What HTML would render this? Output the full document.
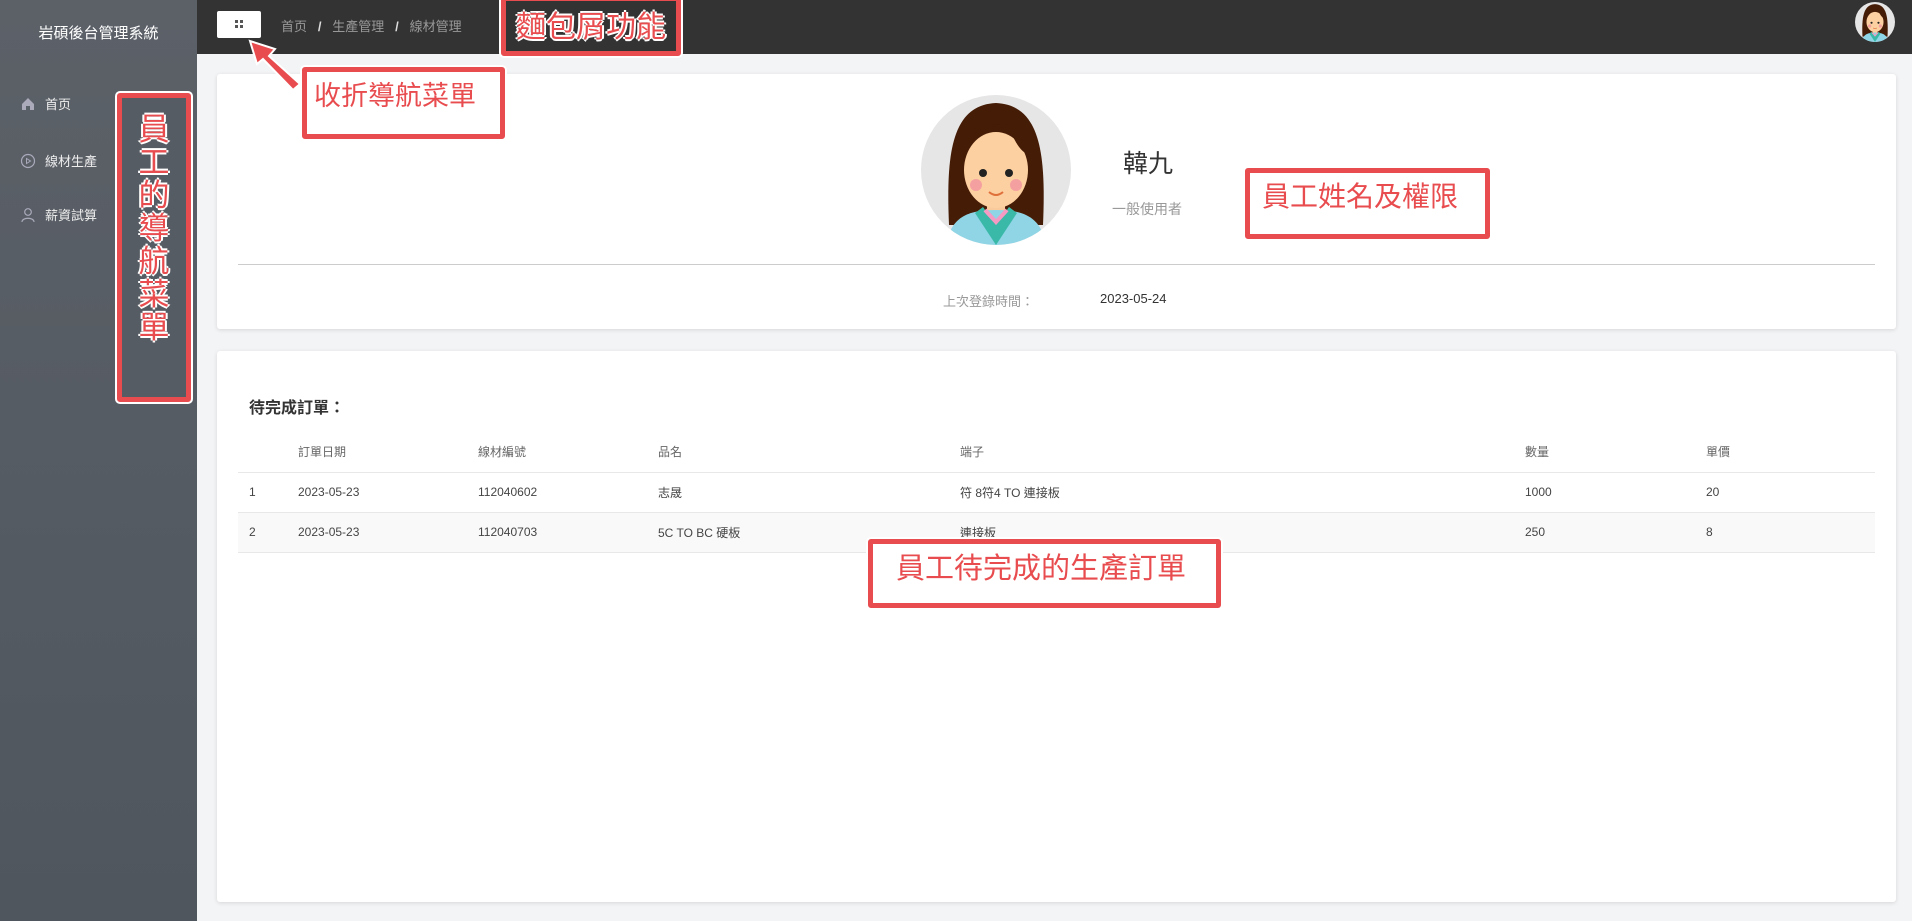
<!DOCTYPE html>
<html><head><meta charset="utf-8"><style>
*{box-sizing:border-box;margin:0;padding:0}
body{width:1912px;height:921px;overflow:hidden;background:#f3f4f6;font-family:"Liberation Sans","Noto Sans CJK TC",sans-serif;position:relative}
.abs{position:absolute}
#side{left:0;top:0;width:197px;height:921px;background:linear-gradient(#5c6168,#4f565e)}
#side .t{position:absolute;top:22px;width:197px;text-align:center;color:#fff;font-size:15px}
.mi{position:absolute;left:20px;color:#eee;font-size:13px;display:flex;align-items:center;gap:9px}
#top{left:197px;top:0;width:1715px;height:54px;background:#333}
.card{position:absolute;background:#fff;border-radius:3px;box-shadow:0 1px 4px rgba(0,0,0,.12)}
.bc{color:#999;font-size:13px;top:16px}
.red{position:absolute;border:5px solid #e84c4f;border-radius:3px;box-shadow:0 0 0 2px #fff}
.rt{color:#e84c4f;font-family:"Noto Sans CJK TC",sans-serif;text-shadow:-2px 0 #fff,2px 0 #fff,0 -2px #fff,0 2px #fff}
table{border-collapse:collapse;font-size:12px;color:#444}
td{height:40px}
</style></head><body>
<div id="side" class="abs"><div class="t">岩碩後台管理系統</div>
<div class="mi" style="top:94px"><svg width="16" height="16" viewBox="0 0 16 16"><path d="M2 8L8 2L14 8V14H10V10H6V14H2Z" fill="#aab"/></svg>首页</div>
<div class="mi" style="top:151px"><svg width="16" height="16" viewBox="0 0 16 16"><circle cx="8" cy="8" r="6.5" fill="none" stroke="#aab" stroke-width="1.2"/><path d="M6.5 5.5L10.5 8L6.5 10.5Z" fill="none" stroke="#aab"/></svg>線材生產</div>
<div class="mi" style="top:205px"><svg width="16" height="16" viewBox="0 0 16 16"><circle cx="8" cy="5" r="3.3" fill="none" stroke="#aab" stroke-width="1.2"/><path d="M2 15C2 10 14 10 14 15" fill="none" stroke="#aab" stroke-width="1.2"/></svg>薪資試算</div>
</div>
<div id="top" class="abs"></div>
<div class="abs" style="left:217px;top:11px;width:44px;height:27px;background:#fff;border-radius:2px"><div class="abs" style="left:18px;top:9px;width:8px;height:8px;background:linear-gradient(90deg,#555 3px,transparent 3px,transparent 5px,#555 5px)"></div><div class="abs" style="left:18px;top:12px;width:8px;height:2px;background:#fff"></div></div>
<div class="abs bc" style="left:281px">首页 &nbsp;&nbsp;<b style="color:#ddd">/</b>&nbsp;&nbsp; 生產管理 &nbsp;&nbsp;<b style="color:#ddd">/</b>&nbsp;&nbsp; 線材管理</div>
<svg class="abs" style="left:1855px;top:2px" width="40" height="40" viewBox="0 0 150 150"><use href="#av"/></svg>

<div class="card" style="left:217px;top:74px;width:1679px;height:255px"></div>
<svg class="abs" style="left:921px;top:95px" width="150" height="150" viewBox="0 0 150 150"><g id="av"><circle cx="75" cy="75" r="75" fill="#e6e6e6"/><clipPath id="c"><circle cx="75" cy="75" r="75"/></clipPath><g clip-path="url(#c)"><path d="M28 130C25 60 30 10 75 8C120 10 125 60 122 130Z" fill="#451c06"/><rect x="66" y="100" width="18" height="20" fill="#f9cb9c"/><path d="M25 150C30 120 50 115 75 115C100 115 120 120 125 150Z" fill="#8fd5e5"/><path d="M62 112L75 130L88 112L96 118L75 150L54 118Z" fill="#3ab9a9"/><path d="M64 115L75 127L86 115" fill="none" stroke="#f59ac2" stroke-width="4"/><ellipse cx="75" cy="75" rx="32" ry="38" fill="#fcd0a1"/><path d="M42 70C45 40 60 30 75 32C95 30 90 52 108 60L108 40C100 25 50 25 42 45Z" fill="#451c06"/><circle cx="62" cy="78" r="4" fill="#222"/><circle cx="88" cy="78" r="4" fill="#222"/><circle cx="55" cy="90" r="6" fill="#f5a0a0"/><circle cx="95" cy="90" r="6" fill="#f5a0a0"/><path d="M68 97Q75 103 82 97" fill="none" stroke="#e0703a" stroke-width="2"/></g></g></svg>
<div class="abs" style="left:1123px;top:144px;font-size:25px;color:#333">韓九</div>
<div class="abs" style="left:1112px;top:199px;font-size:14px;color:#999">一般使用者</div>
<div class="abs" style="left:238px;top:264px;width:1637px;height:1px;background:#ccc"></div>
<div class="abs" style="left:943px;top:291px;font-size:13px;color:#999">上次登錄時間：</div>
<div class="abs" style="left:1100px;top:291px;font-size:13px;color:#333">2023-05-24</div>

<div class="card" style="left:217px;top:351px;width:1679px;height:551px"></div>
<div class="abs" style="left:249px;top:394px;font-size:16px;font-weight:bold;color:#333">待完成訂單：</div>
<table class="abs" style="left:238px;top:432px;width:1637px">
<tr style="border-bottom:1px solid #e8e8e8;color:#666"><td style="width:60px;padding-left:11px"></td><td style="width:180px">訂單日期</td><td style="width:180px">線材編號</td><td style="width:302px">品名</td><td style="width:565px">端子</td><td style="width:181px">數量</td><td>單價</td></tr>
<tr style="border-bottom:1px solid #e8e8e8"><td style="padding-left:11px">1</td><td>2023-05-23</td><td>112040602</td><td>志晟</td><td>符 8符4 TO 連接板</td><td>1000</td><td>20</td></tr>
<tr style="border-bottom:1px solid #e8e8e8;background:#f9f9f9"><td style="padding-left:11px">2</td><td>2023-05-23</td><td>112040703</td><td>5C TO BC 硬板</td><td>連接板</td><td>250</td><td>8</td></tr>
</table>

<div class="red" style="left:117px;top:93px;width:74px;height:309px;background:#565c63"></div>
<div class="abs rt" style="left:134px;top:110px;width:40px;font-size:31px;line-height:33px;text-align:center">員工的導航菜單</div>
<div class="red" style="left:302px;top:67px;width:203px;height:72px;background:#fff"></div>
<div class="abs rt" style="left:314px;top:74px;font-size:27px">收折導航菜單</div>
<div class="red" style="left:501px;top:-4px;width:180px;height:60px;background:#333"></div>
<div class="abs rt" style="left:516px;top:2px;font-size:30px">麵包屑功能</div>
<div class="red" style="left:1245px;top:168px;width:245px;height:71px;background:#fff"></div>
<div class="abs rt" style="left:1262px;top:175px;font-size:28px">員工姓名及權限</div>
<div class="red" style="left:868px;top:539px;width:353px;height:69px;background:#fff"></div>
<div class="abs rt" style="left:896px;top:545px;font-size:29px">員工待完成的生產訂單</div>
<svg class="abs" style="left:245px;top:38px" width="60" height="52" viewBox="0 0 60 52"><path d="M55 46L24 18L30 11L5 3L12 26L18 21L48 52Z" fill="#e84c4f" stroke="#fff" stroke-width="2"/></svg>
</body></html>
